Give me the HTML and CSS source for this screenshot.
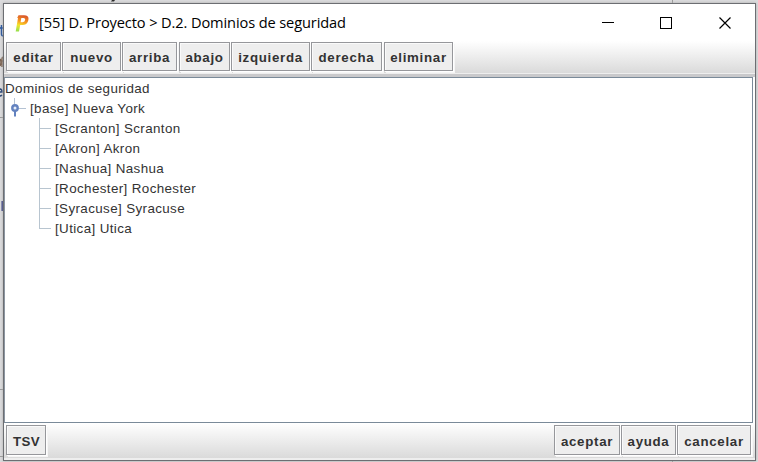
FILE: index.html
```
<!DOCTYPE html>
<html lang="es">
<head>
<meta charset="utf-8">
<title>[55] D. Proyecto &gt; D.2. Dominios de seguridad</title>
<link rel="stylesheet" href="styles.css">
</head>
<body>
<div class="backdrop">
<svg width="758" height="462" viewBox="0 0 758 462">
<path d="M0 117.500h4M0 389.500h4M0 456.500h4M672.500 0v4M672.500 460v2" stroke="#999" fill="none"/>
<path d="M112 0h3l-1 1.500h-3z" fill="#222"/>
<path d="M1.500 201h2v10h-2z" fill="#26307c"/>
<path d="M0 28h3M1.500 25v9q0 2 2 2" stroke="#1b4c9c" stroke-width="1.500" fill="none"/>
<path d="M0 59q2 3 0 7M4 57q-2 0-2 2v8M1 61h3" stroke="#7a604c" stroke-width="1.500" fill="none"/>
<path d="M0 92h2q0-3-2-3M0 96q1 0 2-1" stroke="#1d3c70" stroke-width="1.500" fill="none"/>
</svg>
</div>
<div class="window">
<header class="titlebar">
<svg class="logo" width="16" height="18" viewBox="0 0 16 18">
<defs><linearGradient id="flame" x1="0.600" y1="0" x2="0.400" y2="1"><stop offset="0" stop-color="#d9542b"/><stop offset=".4" stop-color="#f79a20"/><stop offset=".65" stop-color="#f5e52c"/><stop offset="1" stop-color="#9be04a"/></linearGradient></defs>
<path d="M3.500 1.200H9Q13.800 1.200 13.500 5q-.3 5.600-5.500 6H5.200L4 17.500H.7L3 4H2.200zM6.300 4 5.600 8.300H7.700Q10 8 10.200 5.600 10.200 4 8.600 4z" fill="url(#flame)" fill-rule="evenodd"/>
</svg>
<h1>[55] D. Proyecto &gt; D.2. Dominios de seguridad</h1>
<svg class="controls" width="132" height="14" viewBox="0 0 132 14" fill="none" stroke="#000" shape-rendering="crispEdges">
<path d="M0 6.500h12M58.500 1.500h11v11h-11z"/>
<path d="M117.500 1.500l11 11M128.500 1.500l-11 11" shape-rendering="auto" stroke-width="1.200"/>
</svg>
</header>
<nav class="toolbar">
<button class="w55">editar</button><button class="w59">nuevo</button><button class="w55">arriba</button><button class="w51 shifted">abajo</button><button class="w79">izquierda</button><button class="w71">derecha</button><button class="w69 shifted">eliminar</button>
</nav>
<main class="tree">
<div class="root">Dominios de seguridad</div>
<div class="branch">
<svg class="handle" width="25" height="20" viewBox="0 0 25 20"><path d="M9.500 0v6M13 10.500h8" stroke="#b4c2d3"/><path d="M10 12v6.500" stroke="#6382bf" stroke-width="2"/><circle cx="10" cy="10" r="2.700" fill="#e6eefa" stroke="#6382bf" stroke-width="2.400"/></svg>
<span>[base] Nueva York</span>
</div>
<ul>
<li>[Scranton] Scranton</li>
<li>[Akron] Akron</li>
<li>[Nashua] Nashua</li>
<li>[Rochester] Rochester</li>
<li>[Syracuse] Syracuse</li>
<li>[Utica] Utica</li>
</ul>
</main>
<footer class="actions">
<button class="w41 tsv">TSV</button><button class="w66">aceptar</button><button class="w55">ayuda</button><button class="w74">cancelar</button>
</footer>
</div>
</body>
</html>
```
FILE: styles.css
```
* { box-sizing: border-box; }
body { margin: 0; padding: 3px 2px 1px 3px; width: 758px; height: 462px; overflow: hidden; background: #dcdcde; font-family: "Liberation Sans", Arial, sans-serif; }
.backdrop { position: absolute; inset: 0; z-index: -1; }
.window { height: 458px; width: 753px; border: 1px solid #6c6e72; background: #fff; display: flex; flex-direction: column; box-shadow: 0 0 3px #aaa; }
.titlebar { height: 37px; flex: none; display: flex; align-items: center; padding: 0 21px 0 11px; }
.logo { margin-right: 8px; }
h1 { margin: 0; padding-bottom: 2px; font: 14.600px "Open Sans", sans-serif; letter-spacing: -.11px; color: #000; flex: 1; white-space: nowrap; }
.toolbar { height: 36px; flex: none; display: flex; align-items: flex-start; gap: 1px; padding: 1px 2px; background: linear-gradient(#fff, #dadada 32px, #eee 32px, #eee 33px, #c9c9cb 33px); }
button { height: 29px; flex: none; margin: 0; padding: 2px 0 0; border: 1px solid #96979b; border-radius: 0; background: #eee; box-shadow: inset 1px 1px #fafafa, 1px 1px #fff, 2px 2px #f6f6f6; color: #333; font: bold 13.300px "Liberation Sans", Arial, sans-serif; letter-spacing: .7px; text-align: center; white-space: nowrap; }
.w41 { width: 40px; }
.w51 { width: 51px; }
.w55 { width: 55px; }
.w59 { width: 59px; }
.w66 { width: 66px; }
.w69 { width: 69px; }
.w71 { width: 71px; }
.w74 { width: 74px; }
.w79 { width: 79px; }
.shifted { margin-left: 1px; }
.tree { flex: 1; margin-right: 2px; border: 1px solid #7a8a99; border-left-color: #8b95a0; color: #333; font-size: 13.400px; line-height: 20px; letter-spacing: .38px; white-space: nowrap; }
.root { height: 20px; padding-top: 1px; }
.branch { display: flex; height: 20px; }
.branch span { padding-top: 1px; }
ul { list-style: none; margin: 0; padding: 0 0 0 34px; }
li { height: 20px; padding: 1px 0 0 16px; background: linear-gradient(#b8c5d0, #b8c5d0) 0 0 / 1px 100% no-repeat, linear-gradient(#b8c5d0, #b8c5d0) 0 10px / 12px 1px no-repeat; }
li:last-child { background-size: 1px 11px, 12px 1px; }
.actions { height: 37px; flex: none; display: flex; gap: 1px; padding: 2px 4px 0 2px; background: linear-gradient(#fff, #dadada 35px, #eee 35px); }
.actions button { height: 30px; }
.actions .tsv { margin-right: auto; padding-left: 1px; letter-spacing: .3px; }
```
